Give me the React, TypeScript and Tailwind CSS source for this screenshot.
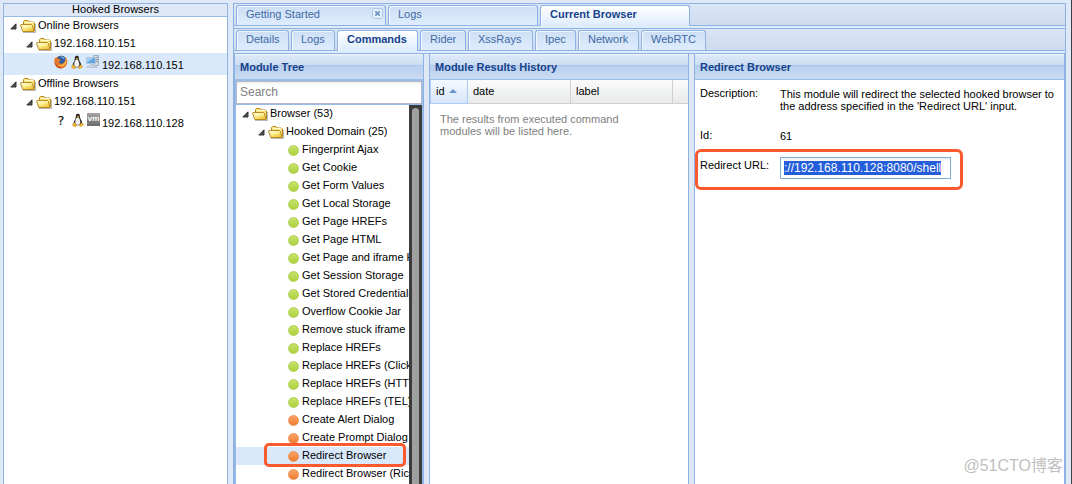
import { useEffect, useRef, type ReactNode } from "react";

function Arrow() {
  return (
    <svg width="7" height="7" viewBox="0 0 7 7" className="shrink-0" aria-hidden="true">
      <path d="M6 0.8V6H0.8Z" fill="#555" stroke="#222" strokeWidth="0.9" strokeLinejoin="round" />
    </svg>
  );
}

function Folder() {
  return (
    <svg width="16" height="14" viewBox="0 0 16 14" className="shrink-0" aria-hidden="true">
      <defs>
        <linearGradient id="folder" x1="0" y1="0" x2="0.6" y2="1">
          <stop offset="0" stopColor="#fffde0" />
          <stop offset="0.5" stopColor="#fdf09a" />
          <stop offset="1" stopColor="#efc83a" />
        </linearGradient>
      </defs>
      <path d="M3 13.500h12.500V5" fill="none" stroke="#8a8a8a" strokeOpacity="0.6" />
      <path d="M3.500 10V2.500l1-1h3.500l1 1.500h4.500l1 1v8h-2z" fill="#f9e27a" stroke="#b88a20" />
      <path d="M5 3.500h8.500" stroke="#fffbd0" />
      <path d="M.5 6l.5-.5h10.500l.8.8 1.700 6.200H2.800z" fill="url(#folder)" stroke="#b88a20" />
    </svg>
  );
}

function Firefox() {
  return (
    <svg width="14" height="14" viewBox="0 0 14 14" aria-hidden="true">
      <circle cx="7" cy="7" r="6.3" fill="#d9661d" />
      <circle cx="7.4" cy="5.3" r="4.6" fill="#2d5e9d" />
      <path d="M6 1.2c2 0 4 .6 5 2.3L9 4 7.500 2.600z" fill="#73a9d6" />
      <path d="M1 2.600l1.800.9c1-.3 2 .1 2.800.9l1.400.4-1.500 1.400-.4 1.500c1 1.500 3.200 1.200 4.500.2 1.700-1.300 2-3 1.600-5 1.800 1.700 2.300 4.500 1.200 6.800-2 4-8 4.700-10.700 1.300C.2 8.900 0 5.300 1 2.600z" fill="#e9792b" />
      <path d="M12 4c1.200 3-.2 6.300-3.300 7.100-2 .5-3.700-.2-4.700-1.400 2.700 1.200 6.600.3 8-5.700z" fill="#f7b64a" />
      <path d="M1.500 8.500c.6 2.500 3 4.500 5.700 4.500" fill="none" stroke="#a83a16" />
    </svg>
  );
}

function Tux() {
  return (
    <svg width="12" height="14" viewBox="0 0 12 14" aria-hidden="true">
      <path d="M4 1.800C4.500.3 7 .2 7.700 1.800c.5 1.200 0 2.500.8 4 .8 1.500 2 3 1.500 5-.5 2-7.500 2-8.200 0-.5-2 1-3.500 1.600-5C4 4.300 3.600 3 4 1.800z" fill="#2a2a2a" />
      <path d="M5.500 4.600c1.600-.6 2.300 1.800 2.800 4.100.4 2-1 3.300-2.400 3.300s-3-1-2.700-3c.4-2.300.9-3.900 2.300-4.400z" fill="#f0f0f0" />
      <path d="M4.700 3.400 6 2.900l1.500.6L6 4.700z" fill="#efa91f" />
      <path d="M.8 10.600l1.800-.8 2.200 2.600-1 1.300-3-.8zM11 10.600l-1.600-.7-2 2.400.8 1.400 3.200-1.500z" fill="#f5b92e" stroke="#b5821a" strokeWidth="0.4" />
    </svg>
  );
}

function Computer() {
  return (
    <svg width="14" height="14" viewBox="0 0 14 14" aria-hidden="true">
      <path d="M7.500.5h5v10h-5z" fill="#d3dbe3" stroke="#a5b2bf" />
      <path d="M8.500 2.500h3.500M10 4.500h2M10 6.500h2" stroke="#8a9cae" />
      <path d="M.5 2.500h9v6h-9z" fill="#5fa8e4" stroke="#b4c6d8" />
      <path d="M1 3h6.500L1 7.500z" fill="#a5d2f7" />
      <path d="M4 9.500h2.500M2 11h8l1 1.500H1z" fill="#dce3ea" stroke="#a8b6c4" strokeWidth="0.7" />
    </svg>
  );
}

function Vm() {
  return (
    <span className="flex h-[13px] w-[13px] items-center justify-center bg-linear-to-b from-[#a5a5a5] to-[#6b6b6b] pb-px text-[8px] leading-none font-bold text-white">
      vm
    </span>
  );
}

type Tab = { name: string; width: string; active?: boolean; closable?: boolean };

const mainTabs: Tab[] = [
  { name: "Getting Started", width: "w-[150px]", closable: true },
  { name: "Logs", width: "w-[150px]" },
  { name: "Current Browser", width: "w-[150px]", active: true },
];

const subTabs: Tab[] = [
  { name: "Details", width: "w-[53px]" },
  { name: "Logs", width: "w-[44px]" },
  { name: "Commands", width: "w-[81px]", active: true },
  { name: "Rider", width: "w-[46px]" },
  { name: "XssRays", width: "w-[65px]" },
  { name: "Ipec", width: "w-[41px]" },
  { name: "Network", width: "w-[61px]" },
  { name: "WebRTC", width: "w-[65px]" },
];

function TabBar({ tabs, label }: { tabs: Tab[]; label: string }) {
  return (
    <div className="border-b border-[#8db2e3] bg-[#deecfd]">
      <div
        role="tablist"
        aria-label={label}
        className="flex h-[22px] items-end gap-[2px] border-b border-[#8db2e3] bg-linear-to-b from-[#dbe6f5] to-[#cddbee] pl-[2px]"
      >
        {tabs.map((tab) => (
          <div
            key={tab.name}
            className={`${tab.width} relative flex items-start rounded-t-[3px] border border-b-0 border-[#8db2e3] shadow-[inset_1px_1px_0_#ffffffb0] ${
              tab.active
                ? "-mb-px h-[21px] bg-linear-to-b from-white to-[#deecfd]"
                : "h-5 bg-linear-to-b from-[#cedff5] to-[#deecfd]"
            }`}
          >
            <button
              role="tab"
              aria-selected={!!tab.active}
              className={`w-full pt-[2px] pl-[9px] text-left leading-3 whitespace-nowrap ${
                tab.active ? "font-bold text-[#15428b]" : "text-[#416aa3]"
              }`}
            >
              {tab.name}
            </button>
            {tab.closable && (
              <button aria-label="Close tab" className="absolute top-[2px] right-[2px]">
                <svg width="11" height="11" viewBox="0 0 11 11">
                  <rect x="0.5" y="0.5" width="10" height="10" rx="2" fill="#e8f1fc" stroke="#a9c6ea" />
                  <path d="M3.300 3.300l4.400 4.400M7.700 3.300L3.300 7.700" stroke="#6c94c6" strokeWidth="1.800" />
                </svg>
              </button>
            )}
          </div>
        ))}
      </div>
      <div className="h-[2px]" />
    </div>
  );
}

function Panel({ title, className, children }: { title: string; className: string; children: ReactNode }) {
  return (
    <section className={`flex min-h-0 flex-col border-x border-[#8db2e3] bg-white ${className}`}>
      <h2 className="h-[26px] shrink-0 border-b border-[#99bbe8] bg-[linear-gradient(#f0f6fd_0,#dae7f6_2px,#cddef3_11px,#abc7ec_11px,#abc7ec_12px,#b8cfee_12px,#cbddf3_25px)] pl-[5px] font-bold leading-[26px] text-[#15428b]">
        {title}
      </h2>
      {children}
    </section>
  );
}

function Branch({ label, indent }: { label: string; indent: string }) {
  return (
    <div className={`flex h-[18px] items-center whitespace-nowrap ${indent}`}>
      <Arrow />
      <span className="w-[3px] shrink-0" />
      <Folder />
      <span className="pb-[2px] pl-[2px]">{label}</span>
    </div>
  );
}

function Host({ ip, selected, children }: { ip: string; selected?: boolean; children: ReactNode }) {
  return (
    <div className={`flex h-[22px] items-start pt-[2px] pl-[50px] ${selected ? "bg-[#d9e8fb]" : ""}`}>
      <span className="flex w-12 justify-between pr-[2px]">{children}</span>
      <span className="pt-[3px] leading-[14px]">{ip}</span>
    </div>
  );
}

const modules = [
  { name: "Fingerprint Ajax", ok: true },
  { name: "Get Cookie", ok: true },
  { name: "Get Form Values", ok: true },
  { name: "Get Local Storage", ok: true },
  { name: "Get Page HREFs", ok: true },
  { name: "Get Page HTML", ok: true },
  { name: "Get Page and iframe HREFs", ok: true },
  { name: "Get Session Storage", ok: true },
  { name: "Get Stored Credentials", ok: true },
  { name: "Overflow Cookie Jar", ok: true },
  { name: "Remove stuck iframe", ok: true },
  { name: "Replace HREFs", ok: true },
  { name: "Replace HREFs (Click Events)", ok: true },
  { name: "Replace HREFs (HTTPS)", ok: true },
  { name: "Replace HREFs (TEL)", ok: true },
  { name: "Create Alert Dialog", ok: false },
  { name: "Create Prompt Dialog", ok: false },
  { name: "Redirect Browser", ok: false, selected: true },
  { name: "Redirect Browser (Rickroll)", ok: false },
];

export default function App() {
  const url = useRef<HTMLInputElement>(null);

  useEffect(() => {
    url.current?.focus();
    url.current?.select();
  }, []);

  return (
    <div className="flex h-screen gap-[5px] overflow-hidden border-r border-[#3c3f45] bg-[#dfe8f6] px-[3px] pt-[3px] pr-[5px] font-['Liberation_Sans',Arial,sans-serif] text-[11px] text-black">
      <aside className="w-[225px] shrink-0 border-x border-t border-[#8db2e3] bg-white">
        <h1 className="h-[13px] border-b border-[#99bbe8] bg-[#dfe8f6] text-center leading-[11px]">Hooked Browsers</h1>
        <Branch label="Online Browsers" indent="pl-[6px]" />
        <Branch label="192.168.110.151" indent="pl-[22px]" />
        <Host ip="192.168.110.151" selected>
          <Firefox />
          <Tux />
          <Computer />
        </Host>
        <Branch label="Offline Browsers" indent="pl-[6px]" />
        <Branch label="192.168.110.151" indent="pl-[22px]" />
        <Host ip="192.168.110.128">
          <span className="w-[14px] text-center font-['DejaVu_Sans',sans-serif] text-[13px] leading-4">?</span>
          <Tux />
          <Vm />
        </Host>
      </aside>

      <main className="flex min-w-0 flex-1 flex-col border-x border-t border-[#8db2e3]">
        <TabBar tabs={mainTabs} label="Main" />
        <TabBar tabs={subTabs} label="Browser" />

        <div className="flex min-h-0 flex-1 gap-[5px]">
          <Panel title="Module Tree" className="w-[190px] shrink-0">
            <div className="flex min-h-0 flex-1 flex-col border-x border-[#99bbe8] bg-[#99bbe8]">
              <input
                type="text"
                aria-label="Search modules"
                placeholder="Search"
                className="my-px h-[23px] w-full shrink-0 border border-[#b5b8c8] bg-white bg-linear-to-b from-[#eeeeee] to-white to-15% px-[3px] pb-[2px] text-[12px] placeholder:text-[#808080]"
              />
              <div className="flex min-h-0 flex-1 bg-white">
                <div className="min-w-0 flex-1 overflow-hidden">
                  <Branch label="Browser (53)" indent="pl-[6px]" />
                  <Branch label="Hooked Domain (25)" indent="pl-[22px]" />
                  <ul>
                    {modules.map((m) => (
                      <li
                        key={m.name}
                        className={`relative flex h-[18px] items-center gap-[3px] pl-[52px] whitespace-nowrap ${
                          m.selected ? "bg-[#d9e8fb]" : ""
                        }`}
                      >
                        <span
                          className={`mt-px h-[11px] w-[11px] shrink-0 rounded-full border ${
                            m.ok
                              ? "border-[#b2cf55] bg-linear-to-b from-[#c7e36a] to-[#acd13a]"
                              : "border-[#ec9257] bg-linear-to-b from-[#fba365] to-[#ef7c2b]"
                          }`}
                        />
                        <span className="pb-[2px]">{m.name}</span>
                        {m.selected && (
                          <span className="absolute -top-[4px] right-[3px] left-7 h-6 rounded-[5px] border-[3px] border-[#fb5a2e]" />
                        )}
                      </li>
                    ))}
                  </ul>
                </div>
                <div className="w-[13px] shrink-0 bg-[#3c3c3c] px-[3px] pt-[3px]">
                  <div className="h-full rounded-t-full bg-[#a0a0a0]" />
                </div>
              </div>
            </div>
          </Panel>

          <Panel title="Module Results History" className="w-[260px] shrink-0">
            <table className="w-full table-fixed border-collapse">
              <thead>
                <tr className="h-[23px] bg-linear-to-b from-[#fbfbfb] to-[#e8eaec] text-left">
                  <th className="w-[37px] border-r border-b border-l border-[#aaccf6] bg-linear-to-b from-[#f5f9fe] to-[#d6e6fa] pl-[5px] font-normal">
                    <span className="flex items-center gap-1">
                      id
                      <svg width="8" height="4" viewBox="0 0 8 4" aria-hidden="true">
                        <path d="M4 0l4 4H0z" fill="#6495d3" />
                      </svg>
                    </span>
                  </th>
                  <th className="w-[103px] border-r border-b border-[#d0d0d0] pl-[5px] font-normal">date</th>
                  <th className="w-[102px] border-r border-b border-[#d0d0d0] pl-[5px] font-normal">label</th>
                  <td className="border-b border-[#d0d0d0]" />
                </tr>
              </thead>
            </table>
            <p className="px-[10px] pt-[9px] pr-14 leading-3 text-[#808080]">
              The results from executed command modules will be listed here.
            </p>
          </Panel>

          <Panel title="Redirect Browser" className="min-w-0 flex-1">
            <dl className="grid grid-cols-[80px_1fr] px-[5px] leading-3">
              <dt className="pt-[7px]">Description:</dt>
              <dd className="pt-2">
                This module will redirect the selected hooked browser to the address specified in the 'Redirect URL'
                input.
              </dd>
              <dt className="pt-[17px]">Id:</dt>
              <dd className="pt-[18px]">61</dd>
            </dl>
            <div className="relative mt-[7px] flex h-[41px] w-[268px] pt-2 pl-[5px]">
              <label htmlFor="redirect-url" className="w-20 shrink-0 pt-[2px] leading-3">
                Redirect URL:
              </label>
              <input
                id="redirect-url"
                ref={url}
                type="text"
                defaultValue="://192.168.110.128:8080/shell"
                className="h-[22px] w-[171px] border border-[#7eadd9] bg-white bg-linear-to-b from-[#eeeeee] to-white to-20% px-[3px] text-[12px] outline-none selection:bg-[#245edb] selection:text-white"
              />
              <span className="pointer-events-none absolute inset-0 rounded-[6px] border-[3px] border-[#fb5a2e]" />
            </div>
          </Panel>
        </div>
      </main>

      <span className="absolute right-[9px] bottom-[6px] font-['Liberation_Sans','Noto_Sans_CJK_SC',sans-serif] text-[16px] leading-6 text-[#bfbfbf]">
        @51CTO博客
      </span>
    </div>
  );
}
